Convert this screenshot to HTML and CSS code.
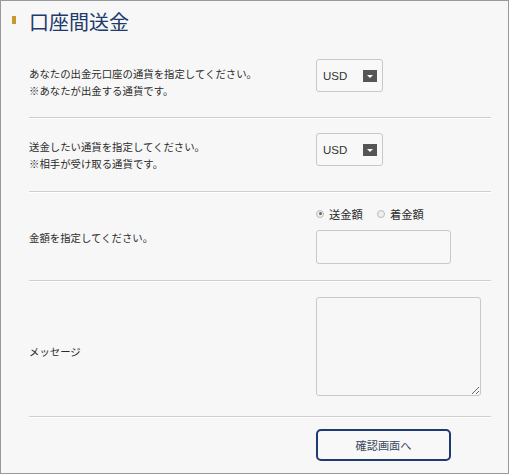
FILE: index.html
```html
<!DOCTYPE html>
<html lang="ja">
<head>
<meta charset="utf-8">
<title>口座間送金</title>
<link rel="stylesheet" href="styles.css">
</head>
<body>
<div class="frame">
  <h1 class="title"><span class="title-bar"></span>口座間送金</h1>
  <div class="form">
    <div class="row row-1">
      <div class="label">あなたの出金元口座の通貨を指定してください。<br>※あなたが出金する通貨です。</div>
      <div class="control">
        <div class="select"><span class="select-text">USD</span><span class="select-arrow"></span></div>
      </div>
    </div>
    <div class="row row-2">
      <div class="label">送金したい通貨を指定してください。<br>※相手が受け取る通貨です。</div>
      <div class="control">
        <div class="select"><span class="select-text">USD</span><span class="select-arrow"></span></div>
      </div>
    </div>
    <div class="row row-3">
      <div class="label">金額を指定してください。</div>
      <div class="control">
        <div class="radios">
          <label class="radio"><span class="radio-dot checked"></span>送金額</label>
          <label class="radio"><span class="radio-dot"></span>着金額</label>
        </div>
        <input class="text-input" type="text">
      </div>
    </div>
    <div class="row row-4">
      <div class="label">メッセージ</div>
      <div class="control">
        <textarea class="textarea"></textarea>
      </div>
    </div>
    <div class="actions">
      <button class="btn" type="button">確認画面へ</button>
    </div>
  </div>
</div>
</body>
</html>
```

FILE: styles.css
```css
html, body {
  margin: 0;
  padding: 0;
  background: #f7f7f7;
}
body {
  font-family: "Noto Sans CJK JP", "Noto Sans", sans-serif;
  color: #333;
}
.frame {
  width: 509px;
  height: 474px;
  box-sizing: border-box;
  border: 1px solid #999;
  background: #f7f7f7;
  padding: 0 0 0 28px;
}
.title {
  margin: 0;
  height: 41px;
  padding-top: 8px;
  box-sizing: border-box;
  display: flex;
  align-items: flex-start;
  font-size: 20px;
  line-height: 26px;
  font-weight: 400;
  color: #1d3b6c;
  position: relative;
}
.title-bar {
  position: absolute;
  left: -17px;
  top: 15px;
  width: 4px;
  height: 8px;
  background: #c59a2b;
}
.form {
  width: 462px;
}
.row {
  display: grid;
  grid-template-columns: 287px 1fr;
  border-bottom: 1px solid #cfcfcf;
  box-shadow: 0 1px 0 #fff;
}
.label {
  align-self: center;
  font-size: 10.4px;
  line-height: 17px;
  color: #2b2b2b;
}
.row-1 { height: 75px; }
.row-1 .label { padding-top: 4px; }
.row-1 .control { padding-top: 17px; }
.row-2 { height: 73px; }
.row-2 .label { padding-top: 1px; }
.row-2 .control { padding-top: 15px; }
.row-3 { height: 88px; }
.row-3 .label { padding-top: 2px; }
.row-3 .control { padding-top: 13px; }
.row-4 { height: 135px; }
.row-4 .label { padding-top: 6px; }
.row-4 .control { padding-top: 16px; }

.select {
  width: 67px;
  height: 33px;
  box-sizing: border-box;
  border: 1px solid #c8c8c8;
  border-radius: 3px;
  background: #f8f8f8;
  display: flex;
  align-items: center;
  justify-content: space-between;
  padding: 0 5px 0 6px;
}
.select-text {
  font-family: "Liberation Sans", Arial, sans-serif;
  font-size: 11.5px;
  color: #333;
}
.select-arrow {
  width: 14px;
  height: 12px;
  background: #555;
  position: relative;
}
.select-arrow::after {
  content: "";
  position: absolute;
  left: 4px;
  top: 5px;
  border-left: 3px solid transparent;
  border-right: 3px solid transparent;
  border-top: 3px solid #fff;
}
.radios {
  display: flex;
  gap: 14px;
  height: 17px;
  align-items: center;
  margin-bottom: 8px;
}
.radio {
  display: flex;
  align-items: center;
  gap: 5px;
  font-size: 11.3px;
  color: #2b2b2b;
}
.radio-dot {
  width: 8px;
  height: 8px;
  box-sizing: border-box;
  border: 1px solid #bbb;
  border-radius: 50%;
  background: #eee;
  position: relative;
}
.radio-dot.checked::after {
  content: "";
  position: absolute;
  left: 1.5px;
  top: 1.5px;
  width: 3px;
  height: 3px;
  border-radius: 50%;
  background: #666;
}
.text-input {
  display: block;
  width: 135px;
  height: 34px;
  box-sizing: border-box;
  border: 1px solid #c8c8c8;
  border-radius: 3px;
  background: #f8f8f8;
  margin: 0;
  padding: 0 6px;
}
.textarea {
  display: block;
  width: 165px;
  height: 99px;
  box-sizing: border-box;
  border: 1px solid #c8c8c8;
  border-radius: 3px;
  background: #f7f7f7;
  margin: 0;
  padding: 4px;
}
.actions {
  padding: 12px 0 0 287px;
}
.btn {
  width: 135px;
  height: 32px;
  box-sizing: border-box;
  border: 2px solid #1d3b6c;
  border-radius: 5px;
  background: #f8f8f8;
  font-family: "Noto Sans CJK JP", "Noto Sans", sans-serif;
  font-size: 11.2px;
  color: #3b4a5e;
  padding: 0;
  cursor: pointer;
}
```
